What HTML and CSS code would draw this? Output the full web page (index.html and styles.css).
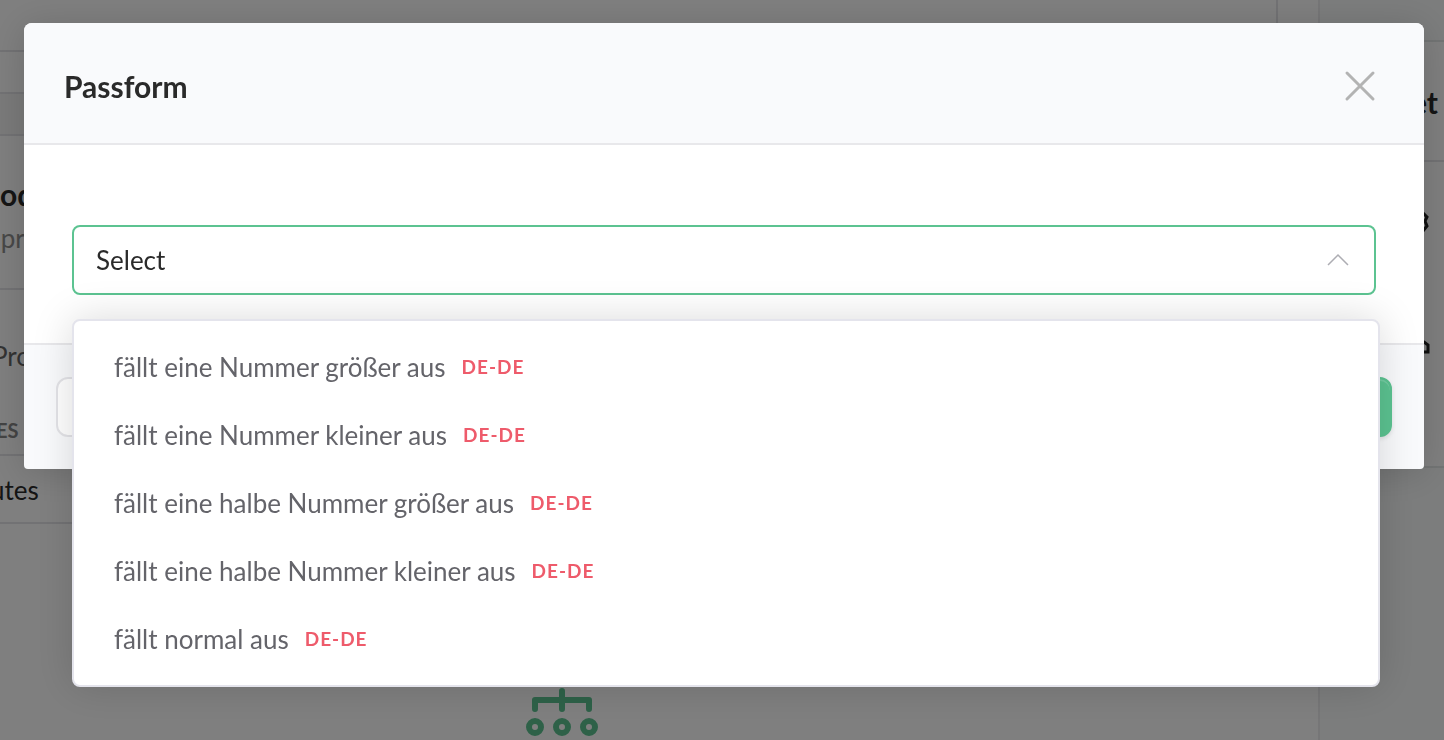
FILE: index.html
```html
<!DOCTYPE html>
<html lang="en">
<head>
    <meta charset="UTF-8">
    <meta name="viewport" content="width=device-width, initial-scale=1.0">
    <title>Passform</title>
    <link rel="stylesheet" href="styles.css">
</head>
<body>
    <!-- Page behind the dialog -->
    <div class="page" aria-hidden="true">
        <main class="content">
            <div class="toolbar"></div>
            <div class="tabs"></div>
            <div class="spacer"></div>
            <section class="intro">
                <h2>od</h2>
                <p>&nbsp;pr</p>
            </section>
            <section class="group">
                <p class="group-title">Pro</p>
                <p class="group-label">ES</p>
            </section>
            <div class="row">utes</div>
            <div class="empty">
                <svg class="tree-icon" viewBox="0 0 72 50" width="72" height="50" fill="none" stroke="#5cc391" stroke-width="6" stroke-linecap="round" stroke-linejoin="round">
                    <path d="M36 4v18M9 22v-9h54v9"/>
                    <circle cx="9" cy="40" r="6"/>
                    <circle cx="36" cy="40" r="6"/>
                    <circle cx="63" cy="40" r="6"/>
                </svg>
            </div>
        </main>
        <aside class="sidebar">
            <div class="sidebar-top"></div>
            <h2 class="sidebar-title">et</h2>
            <div class="sidebar-body">
                <svg class="side-icon" viewBox="0 0 24 24" width="24" height="24" fill="none" stroke="#222" stroke-width="3">
                    <path d="M15 3h2l4 4-2 4 2 5-4 5h-2"/>
                </svg>
                <svg class="side-icon" viewBox="0 0 24 24" width="24" height="24" fill="none" stroke="#222" stroke-width="3">
                    <path d="M4 8h14l4 3v7H4z"/>
                </svg>
            </div>
        </aside>
    </div>

    <div class="overlay">
        <div class="modal" role="dialog" aria-labelledby="modalTitle">
            <header class="modal-header">
                <h1 id="modalTitle">Passform</h1>
                <button class="close" type="button" aria-label="Close">
                    <svg viewBox="0 0 32 32" width="32" height="32" fill="none" stroke="#b3b3b3" stroke-width="3" stroke-linecap="round">
                        <path d="M3 3l26 26M29 3L3 29"/>
                    </svg>
                </button>
            </header>
            <div class="modal-body">
                <div class="field">
                    <select class="select" aria-labelledby="modalTitle">
                        <option>Select</option>
                    </select>
                    <svg class="chevron" viewBox="0 0 22 14" width="22" height="14" fill="none" stroke="#adadb3" stroke-width="1.5">
                        <path d="M1 12L11 2l10 10"/>
                    </svg>
                    <ul class="menu" role="listbox" aria-labelledby="modalTitle">
                        <li role="option">fällt eine Nummer größer aus <span class="locale">DE-DE</span></li>
                        <li role="option">fällt eine Nummer kleiner aus <span class="locale">DE-DE</span></li>
                        <li role="option">fällt eine halbe Nummer größer aus <span class="locale">DE-DE</span></li>
                        <li role="option">fällt eine halbe Nummer kleiner aus <span class="locale">DE-DE</span></li>
                        <li role="option">fällt normal aus <span class="locale">DE-DE</span></li>
                    </ul>
                </div>
            </div>
            <footer class="modal-footer">
                <button class="btn" type="button" aria-label="Cancel"></button>
                <button class="btn btn-primary" type="button" aria-label="Save"></button>
            </footer>
        </div>
    </div>
</body>
</html>
```

FILE: styles.css
```css
* {
    box-sizing: border-box;
}
body {
    font-family: Lato, sans-serif;
    font-size: 26px;
    line-height: 36px;
    margin: 0;
    color: #2a2a2a;
    background-color: #fff;
    overflow: hidden;
}
h1, h2, p, ul {
    margin: 0;
    padding: 0;
}

/* page behind */
.page {
    display: flex;
    height: 100vh;
    overflow: hidden;
}
.content {
    flex: 1;
    border-right: 2px solid #ececef;
}
.toolbar {
    height: 52px;
    margin-right: 40px;
    border-right: 2px solid #e4e4e8;
    border-bottom: 2px solid #e4e4e8;
}
.tabs {
    height: 42px;
    border-bottom: 2px solid #e4e4e8;
}
.spacer {
    height: 42px;
    background-color: #f4f5f5;
    border-bottom: 2px solid #e4e4e8;
}
.intro {
    height: 154px;
    padding-top: 40px;
    border-bottom: 2px solid #e4e4e8;
}
.intro h2 {
    font-size: 30px;
}
.intro p {
    margin-top: 8px;
    margin-left: -6px;
    color: #909090;
}
.group {
    height: 166px;
    padding-top: 48px;
    border-bottom: 2px solid #e4e4e8;
}
.group-title {
    margin-left: -8px;
    color: #666;
}
.group-label {
    margin-top: 38px;
    margin-left: -4px;
    font-size: 20px;
    font-weight: bold;
    color: #888;
}
.row {
    height: 68px;
    padding: 16px 0;
    margin-left: -10px;
    border-bottom: 2px solid #e4e4e8;
}
.empty {
    padding-top: 163px;
    padding-right: 194px;
    text-align: center;
}
.tree-icon {
    display: block;
    margin: 0 auto;
}
.sidebar {
    width: 124px;
    background-color: #f9fbfa;
}
.sidebar-top {
    height: 42px;
    border-bottom: 2px solid #e4e8e8;
}
.sidebar-title {
    height: 120px;
    padding: 42px 6px;
    text-align: right;
    font-size: 30px;
    background-color: #fff;
    border-bottom: 2px solid #e4e4e8;
}
.sidebar-body {
    display: flex;
    flex-direction: column;
    align-items: flex-end;
    gap: 100px;
    height: 306px;
    padding: 48px 14px;
    background-color: #fff;
    border-bottom: 2px solid #e4e8e8;
}

/* dialog */
.overlay {
    position: fixed;
    inset: 0;
    padding: 23px 20px 0 24px;
    background-color: rgba(0, 0, 0, 0.5);
}
.modal {
    border-radius: 8px;
    background-color: #fff;
    box-shadow: 0 4px 36px rgba(0, 0, 0, 0.16);
}
.modal-header {
    display: flex;
    align-items: center;
    justify-content: space-between;
    height: 122px;
    padding: 6px 48px 0 40px;
    background-color: #f9fafc;
    border-bottom: 2px solid #e8e8eb;
    border-radius: 8px 8px 0 0;
}
.modal-header h1 {
    font-size: 30px;
    font-weight: bold;
}
.close {
    display: flex;
    padding: 0;
    border: none;
    background: none;
    cursor: pointer;
}
.modal-body {
    padding: 80px 48px 48px;
}
.field {
    position: relative;
}
.select {
    appearance: none;
    display: block;
    width: 100%;
    height: 70px;
    padding: 0 22px;
    font: inherit;
    color: #2a2a2a;
    background-color: #fff;
    border: 2px solid #5cc391;
    border-radius: 8px;
    outline: none;
}
.chevron {
    position: absolute;
    top: 28px;
    right: 27px;
    pointer-events: none;
}
.menu {
    position: absolute;
    top: 94px;
    left: 0;
    right: -4px;
    padding: 12px 0;
    list-style: none;
    color: #64646a;
    background-color: #fff;
    border: 2px solid #e4e4ec;
    border-radius: 8px;
    box-shadow: 0 0 40px rgba(0, 0, 0, 0.15);
}
.menu li {
    display: flex;
    align-items: center;
    gap: 16px;
    padding: 16px 40px;
    cursor: pointer;
}
.locale {
    font-size: 19px;
    font-weight: bold;
    letter-spacing: 1px;
    color: #ee5b6b;
}
.modal-footer {
    display: flex;
    justify-content: space-between;
    padding: 32px;
    background-color: #f9fafc;
    border-top: 2px solid #e8e8eb;
    border-radius: 0 0 4px 4px;
}
.btn {
    width: 160px;
    height: 60px;
    background-color: #fff;
    border: 2px solid #e4e4e8;
    border-radius: 12px;
}
.btn-primary {
    background-color: #5cc391;
    border-color: #5cc391;
    box-shadow: 0 2px 4px rgba(0, 0, 0, 0.1), inset 0 2px 0 #74cda2;
}
```
